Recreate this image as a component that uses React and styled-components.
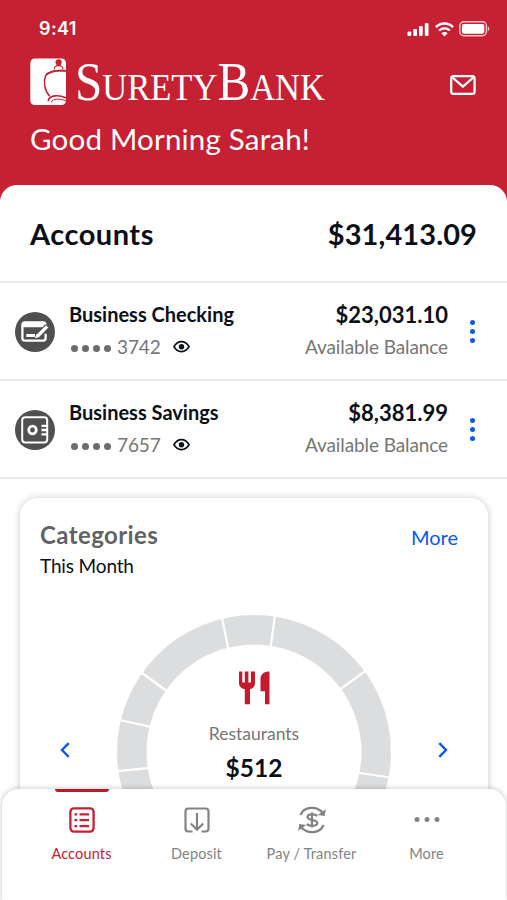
import React from "react";
import styled, { createGlobalStyle } from "styled-components";

const GlobalStyle = createGlobalStyle`
  * { box-sizing: border-box; }
  body { margin: 0; background: #fff; }
  button { border: 0; padding: 0; background: none; font: inherit; color: inherit; }
  svg { display: block; flex: none; overflow: visible; }
`;

const Screen = styled.div`
  position: relative;
  width: 507px;
  height: 900px;
  overflow: hidden;
  background: #fff;
  color: #0b1018;
  font-family: Lato, "Liberation Sans", sans-serif;
`;

const Header = styled.header`
  height: 205px;
  background: #c62033;
  color: #fff;
`;

const StatusBar = styled.div`
  display: flex;
  align-items: center;
  justify-content: space-between;
  height: 58px;
  padding: 0 17px 0 39px;
`;

const Clock = styled.span`
  font: 600 18px/22px Inter, sans-serif;
  letter-spacing: 0.4px;
`;

const StatusIcons = styled.div`
  display: flex;
  align-items: center;
  gap: 5px;
`;

const BrandRow = styled.div`
  display: flex;
  align-items: flex-start;
  justify-content: space-between;
  height: 60px;
  padding: 0 31px 0 30px;
`;

const MailButton = styled.button`
  margin-top: 17px;
`;

const Greeting = styled.h1`
  margin: 3px 0 0 30px;
  font-size: 29.5px;
  font-weight: 400;
  line-height: 36px;
  letter-spacing: 0.2px;
`;

const Sheet = styled.main`
  margin-top: -20px;
  border-radius: 17px 17px 0 0;
  background: #fff;
`;

const Summary = styled.div`
  display: flex;
  align-items: center;
  justify-content: space-between;
  height: 98px;
  padding: 2px 30px 0;
  border-bottom: 2px solid #ebebec;
  font-size: 29px;
  font-weight: 700;
  line-height: 36px;
`;

const SummaryLabel = styled.span`
  letter-spacing: 0.5px;
`;

const SummaryTotal = styled.span`
  letter-spacing: 0.1px;
`;

const AccountRow = styled.section`
  display: flex;
  height: 98px;
  padding: 18px 23px 0 15px;
  border-bottom: 2px solid #e8e8e9;
`;

const AccountIcon = styled.div`
  display: grid;
  place-items: center;
  width: 40px;
  height: 40px;
  margin-top: 11px;
  border-radius: 50%;
  background: #505051;
`;

const AccountInfo = styled.div`
  flex: 1;
  padding-left: 14px;
`;

const AccountName = styled.div`
  font-size: 20px;
  font-weight: 700;
  line-height: 26px;
`;

const MaskedNumber = styled.div`
  display: flex;
  align-items: center;
  height: 40px;
  color: #757678;
  font-size: 19px;
`;

const MaskDots = styled.span`
  display: flex;
  gap: 4px;
  margin: 2px 6px 0 2px;

  i {
    width: 7px;
    height: 7px;
    border-radius: 50%;
    background: #6b6c6e;
  }
`;

const Digits = styled.span`
  width: 56px;
  margin-top: -1px;
  letter-spacing: -0.1px;
`;

const AccountBalance = styled.div`
  text-align: right;
`;

const Amount = styled.div`
  font-size: 22px;
  font-weight: 700;
  line-height: 27px;
`;

const BalanceLabel = styled.div`
  color: #757678;
  font-size: 19px;
  line-height: 37px;
  letter-spacing: -0.1px;
`;

const KebabButton = styled.button`
  display: flex;
  flex-direction: column;
  gap: 4px;
  align-self: flex-start;
  margin: 19px 9px 0 22px;

  i {
    width: 5px;
    height: 5px;
    border-radius: 50%;
    background: #0b5aec;
  }
`;

const Card = styled.section`
  height: 420px;
  margin: 19px 19px 0 20px;
  padding: 20px 30px 0 20px;
  border-radius: 18px;
  background: #fff;
  box-shadow: 0 0 6px 1px rgba(0, 0, 0, 0.17);
`;

const CardHeader = styled.div`
  display: flex;
  justify-content: space-between;
`;

const CardTitle = styled.h2`
  margin: 0;
  color: #626366;
  font-size: 24px;
  font-weight: 700;
  line-height: 33px;
  letter-spacing: 0.4px;
`;

const CardSubtitle = styled.div`
  font-size: 19px;
  line-height: 29px;
  letter-spacing: -0.15px;
`;

const CardLink = styled.a`
  margin-top: 4px;
  color: #0b5aec;
  font-size: 20px;
  line-height: 30px;
`;

const Carousel = styled.div`
  display: flex;
  justify-content: space-between;
  margin: 34px 9px 0 19px;
`;

const ArrowButton = styled.button`
  align-self: flex-start;
  margin-top: 127px;
`;

const Chart = styled.div`
  display: grid;
  width: 276px;
  height: 276px;

  > * { grid-area: 1 / 1; }
`;

const ChartLabel = styled.div`
  display: flex;
  flex-direction: column;
  align-items: center;
  padding-top: 57px;
`;

const CategoryName = styled.div`
  margin-top: 17px;
  color: #757678;
  font-size: 17.5px;
  line-height: 24px;
`;

const CategoryAmount = styled.div`
  margin-top: 6px;
  font-size: 24.5px;
  font-weight: 700;
  line-height: 32px;
`;

const TabBar = styled.nav`
  position: absolute;
  right: 1px;
  bottom: 0;
  left: 2px;
  display: flex;
  height: 111px;
  padding-left: 22px;
  border-radius: 17px 17px 0 0;
  background: #fff;
  box-shadow: 0 0 5px 1px rgba(0, 0, 0, 0.18);
`;

const Tab = styled.button`
  display: flex;
  flex-direction: column;
  align-items: center;
  width: 115px;
  color: ${(p) => (p.$active ? "#c62033" : "#828385")};
  font-size: 14.5px;
  letter-spacing: 0.15px;
  line-height: 20px;
`;

const TabMarker = styled.span`
  width: 54px;
  height: 3px;
  margin-bottom: 11px;
  border-radius: 0 0 3px 3px;
  background: ${(p) => (p.$active ? "#bd182d" : "transparent")};
`;

const TabIcon = styled.span`
  display: grid;
  place-items: center;
  height: 33px;
  margin-bottom: 8px;
`;

const SignalIcon = () => (
  <svg width="23" height="15" viewBox="0 0 23 15" fill="#fff">
    <rect x="0.5" y="9.5" width="3.7" height="4.5" rx="1" />
    <rect x="6.3" y="7" width="3.7" height="7" rx="1" />
    <rect x="12" y="4" width="3.7" height="10" rx="1" />
    <rect x="17.8" y="1" width="3.7" height="13" rx="1" />
  </svg>
);

const WifiIcon = () => (
  <svg width="19" height="15" viewBox="0 0 19 15" fill="none" stroke="#fff" strokeWidth="2.3">
    <path d="M.9 5.1C5.8.3 13.2.3 18.1 5.1" />
    <path d="M4.1 8.5c3.1-2.9 7.7-2.9 10.8 0" />
    <path d="M6.4 11.3c1.8-1.6 4.4-1.6 6.2 0L9.5 14.4z" fill="#fff" stroke="none" />
  </svg>
);

const BatteryIcon = () => (
  <svg width="31" height="16" viewBox="0 0 31 16">
    <rect x="0.8" y="0.8" width="26.6" height="14" rx="4" fill="none" stroke="#fff" strokeOpacity=".75" strokeWidth="1.4" />
    <rect x="2.9" y="2.9" width="22.4" height="9.8" rx="2" fill="#fff" />
    <path d="M28.8 5.3c2 .8 2 4.2 0 5z" fill="#fff" fillOpacity=".75" />
  </svg>
);

const Logo = () => (
  <svg width="300" height="52" viewBox="0 0 300 52" role="img" aria-label="SuretyBank">
    <rect x="0.3" y="0.5" width="35.7" height="46.5" rx="4.5" fill="#fff" />
    <g fill="none" stroke="#c62033">
      <path d="M36 12.7C28 12 20 13.5 15.8 17.2c-2.5 6-1.7 14.5 3.8 21" strokeWidth="1.5" />
      <path d="M16 16.8c3.7-3.3 11-4.8 20-3.9" strokeWidth="1.9" />
      <path d="M24.2 11.4c.3-5 8.3-5.2 8.8 0" strokeWidth="1.1" />
      <path d="M18.2 43.3c.5-7 11.5-6.3 17.8-3.4" strokeWidth="1.6" />
      <path d="M21.3 44.5c1-4.3 8.7-4.1 14.7-1.6" strokeWidth="1" />
    </g>
    <circle cx="28.6" cy="4.3" r="3.1" fill="#c62033" />
    <path d="M25.6 8.3c1.7-1.7 4.3-1.7 6 0z" fill="#c62033" />
    <text x="45" y="42" fill="#fff" fontFamily="'Liberation Serif', serif" fontSize="38" textLength="250" lengthAdjust="spacingAndGlyphs">
      <tspan fontSize="54">S</tspan>URETY<tspan fontSize="54">B</tspan>ANK
    </text>
  </svg>
);

const MailIcon = () => (
  <svg width="26" height="20" viewBox="0 0 26 20" fill="none" stroke="#fff" strokeWidth="2.3" strokeLinejoin="round">
    <rect x="1.2" y="1.2" width="23.4" height="17.6" rx="2.4" />
    <path d="m2.5 2.5 10.4 9.2 10.4-9.2" />
  </svg>
);

const CheckIcon = () => (
  <svg width="28" height="22" viewBox="0 0 28 22" fill="none" stroke="#fff">
    <path d="M24.3 4V3.6c0-1.4-.8-2.2-2.2-2.200H3.900c-1.500 0-2.500.8-2.500 2.300V17.200c0 1.500 1 2.400 2.500 2.400h18.500c1.400 0 2.200-.9 2.200-2.300v-4.600" strokeWidth="2.300" />
    <path d="M1.500 4h21.500" strokeWidth="4.500" />
    <path d="M5.300 14.500h8.700" strokeWidth="3" />
    <path d="m17 14.800 9.300-9.600" strokeWidth="5.500" stroke="#505051" />
    <path d="m16.700 15 9.500-9.700" strokeWidth="3.300" />
    <path d="m14 17.200 1.400-4.200 2.900 2.900z" fill="#fff" stroke="none" />
  </svg>
);

const SafeIcon = () => (
  <svg width="28" height="28" viewBox="0 0 28 28" fill="none" stroke="#fff" strokeWidth="2">
    <rect x="1.2" y="1.3" width="25" height="25.2" rx="3" />
    <circle cx="11.5" cy="14" r="3.8" strokeWidth="2.7" />
    <path d="M26 9.800h-5.500M26 14h-5.500M26 18.400h-5.500" strokeWidth="2.300" />
  </svg>
);

const EyeIcon = () => (
  <svg width="17" height="14" viewBox="0 0 17 14">
    <path d="M1 6.7C4.5-.1 12.5-.1 16 6.7c-3.5 6.6-11.5 6.6-15 0z" fill="none" stroke="#0b1018" strokeWidth="1.8" />
    <circle cx="8.5" cy="6.7" r="2.7" fill="#0b1018" />
  </svg>
);

const DIVIDERS = [
  [221.3, 614, 228.3, 649], [275.2, 614, 270.4, 649], [140, 671.5, 168, 692],
  [367.5, 669.5, 339, 690], [115, 719, 151, 726.8], [115, 771.4, 151, 767.8],
  [393, 778, 357, 772.5],
];

const Donut = () => (
  <svg width="276" height="276" viewBox="116 614 276 276">
    <circle cx="254" cy="752" r="122.2" fill="none" stroke="#dbddde" strokeWidth="29.4" />
    {DIVIDERS.map(([x1, y1, x2, y2]) => (
      <line key={`${x1}-${y1}`} x1={x1} y1={y1} x2={x2} y2={y2} stroke="#fff" strokeWidth="2.2" />
    ))}
  </svg>
);

const CutleryIcon = () => (
  <svg width="32" height="34" viewBox="0 0 32 34" fill="#c41a2e">
    <path d="M1 .5h3.3v11h2.500V.5h3.600v11h2.500V.5H17v11c0 4-2 6-5 6.700v15H6.800v-15C3 17.500 1 15.500 1 11.500z" />
    <path d="M31.500.5v32.700H27v-13h-4.500V8.500c0-5.500 3.800-8 9-8z" />
  </svg>
);

const Chevron = ({ back }) => (
  <svg width="12" height="18" viewBox="0 0 12 18" fill="none" stroke="#0b5aec" strokeWidth="2.4">
    <path d={back ? "M9.7 2.2 3 9l6.7 6.8" : "M2.3 2.2 9 9l-6.7 6.8"} />
  </svg>
);

const ListIcon = () => (
  <svg width="26" height="26" viewBox="0 0 26 26" fill="none" stroke="currentColor" strokeWidth="2.3">
    <rect x="1.4" y="1.4" width="23.2" height="23.2" rx="3.5" />
    <path d="M5.5 7.4h2.7M10.5 7.4h9.5M5.5 13.2h2.7M10.5 13.2h9.5M5.5 19.1h2.7M10.5 19.1h9.5" />
  </svg>
);

const DepositIcon = () => (
  <svg width="26" height="26" viewBox="0 0 26 26" fill="none" stroke="currentColor" strokeWidth="2.2">
    <path d="M8.5 24.5H4.500c-2 0-3-1-3-3v-17c0-2 1-3 3-3h17c2 0 3 1 3 3v17c0 2-1 3-3 3h-4" />
    <path d="M13 6v16.500M6.800 16.500l6.200 6.200 6.200-6.200" />
  </svg>
);

const TransferIcon = () => (
  <svg width="30" height="30" viewBox="0 0 30 30" fill="none" stroke="currentColor" strokeWidth="2.2">
    <path d="M3.5 10C7 1.500 19 .5 25.500 7.500" />
    <path d="M28.800 4.300 27.700 11l-7-1z" fill="currentColor" stroke="none" />
    <path d="M26.500 20C23 28.500 11 29.500 4.500 22.500" />
    <path d="M1.200 25.700 2.300 19l7 1z" fill="currentColor" stroke="none" />
    <path d="M20.300 10.800c-2.300-1.900-9.800-2.200-9.800 1.200 0 4 9.800 2 9.800 6 0 3.600-8 3.400-10.600 1.200M15 7.500v15" />
  </svg>
);

const MoreIcon = () => (
  <svg width="28" height="8" viewBox="0 0 28 8" fill="currentColor">
    <circle cx="4" cy="3.500" r="2.500" /><circle cx="14" cy="3.500" r="2.500" /><circle cx="24" cy="3.500" r="2.500" />
  </svg>
);

const ACCOUNTS = [
  { name: "Business Checking", digits: "3742", amount: "$23,031.10", Icon: CheckIcon },
  { name: "Business Savings", digits: "7657", amount: "$8,381.99", Icon: SafeIcon },
];

const TABS = [
  { label: "Accounts", Icon: ListIcon, active: true },
  { label: "Deposit", Icon: DepositIcon },
  { label: "Pay / Transfer", Icon: TransferIcon },
  { label: "More", Icon: MoreIcon },
];

export default function App() {
  return (
    <Screen>
      <GlobalStyle />
      <Header>
        <StatusBar>
          <Clock>9:41</Clock>
          <StatusIcons><SignalIcon /><WifiIcon /><BatteryIcon /></StatusIcons>
        </StatusBar>
        <BrandRow>
          <Logo />
          <MailButton aria-label="Messages"><MailIcon /></MailButton>
        </BrandRow>
        <Greeting>Good Morning Sarah!</Greeting>
      </Header>
      <Sheet>
        <Summary>
          <SummaryLabel>Accounts</SummaryLabel>
          <SummaryTotal>$31,413.09</SummaryTotal>
        </Summary>
        {ACCOUNTS.map(({ name, digits, amount, Icon }) => (
          <AccountRow key={name}>
            <AccountIcon><Icon /></AccountIcon>
            <AccountInfo>
              <AccountName>{name}</AccountName>
              <MaskedNumber>
                <MaskDots><i /><i /><i /><i /></MaskDots>
                <Digits>{digits}</Digits>
                <EyeIcon />
              </MaskedNumber>
            </AccountInfo>
            <AccountBalance>
              <Amount>{amount}</Amount>
              <BalanceLabel>Available Balance</BalanceLabel>
            </AccountBalance>
            <KebabButton aria-label="Account options"><i /><i /><i /></KebabButton>
          </AccountRow>
        ))}
        <Card>
          <CardHeader>
            <div>
              <CardTitle>Categories</CardTitle>
              <CardSubtitle>This Month</CardSubtitle>
            </div>
            <CardLink>More</CardLink>
          </CardHeader>
          <Carousel>
            <ArrowButton aria-label="Previous"><Chevron back /></ArrowButton>
            <Chart>
              <Donut />
              <ChartLabel>
                <CutleryIcon />
                <CategoryName>Restaurants</CategoryName>
                <CategoryAmount>$512</CategoryAmount>
              </ChartLabel>
            </Chart>
            <ArrowButton aria-label="Next"><Chevron /></ArrowButton>
          </Carousel>
        </Card>
      </Sheet>
      <TabBar>
        {TABS.map(({ label, Icon, active }) => (
          <Tab key={label} $active={active}>
            <TabMarker $active={active} />
            <TabIcon><Icon /></TabIcon>
            {label}
          </Tab>
        ))}
      </TabBar>
    </Screen>
  );
}
